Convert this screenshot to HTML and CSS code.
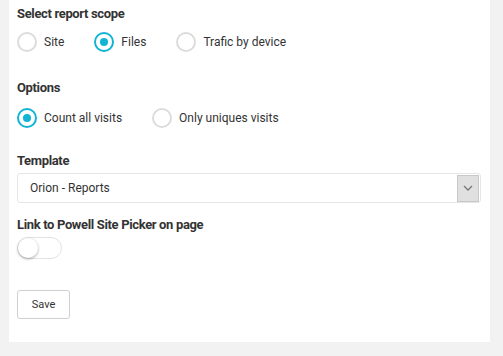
FILE: index.html
```html
<!DOCTYPE html>
<html>
<head>
<meta charset="utf-8">
<link rel="stylesheet" href="styles.css">
</head>
<body>
<div class="panel">
  <div class="section s1">
    <div class="heading">Select report scope</div>
    <div class="radios">
      <label class="radio"><span class="dot"></span><span class="lbl">Site</span></label>
      <label class="radio on"><span class="dot"></span><span class="lbl">Files</span></label>
      <label class="radio"><span class="dot"></span><span class="lbl">Trafic by device</span></label>
    </div>
  </div>
  <div class="section s2">
    <div class="heading">Options</div>
    <div class="radios">
      <label class="radio on"><span class="dot"></span><span class="lbl">Count all visits</span></label>
      <label class="radio"><span class="dot"></span><span class="lbl">Only uniques visits</span></label>
    </div>
  </div>
  <div class="section s3">
    <div class="heading">Template</div>
    <div class="select">
      <span class="value">Orion - Reports</span>
      <span class="arrow"><svg width="10" height="6" viewBox="0 0 10 6"><path d="M1 1 L5 5 L9 1" fill="none" stroke="#777" stroke-width="1.3"/></svg></span>
    </div>
  </div>
  <div class="section s4">
    <div class="heading">Link to Powell Site Picker on page</div>
    <div class="toggle"><span class="knob"></span></div>
  </div>
  <button class="save">Save</button>
</div>
</body>
</html>
```
FILE: styles.css
```css
html, body { margin: 0; padding: 0; }
body {
  background: #f2f2f2;
  width: 503px;
  height: 356px;
  font-family: Roboto, "Noto Sans", sans-serif;
  color: #333;
}
.panel {
  margin-left: 9px;
  width: 481px;
  height: 342px;
  background: #fff;
  box-sizing: border-box;
  padding: 6px 9px 0 8px;
}
.heading {
  font-size: 13px;
  font-weight: 700;
  line-height: 16px;
  letter-spacing: -0.35px;
  color: #333;
}
.radios {
  display: flex;
  margin-top: 10px;
}
.s2 .radios { margin-top: 12px; }
.radio {
  display: flex;
  align-items: center;
  margin-right: 30px;
  font-size: 12px;
}
.dot {
  width: 16px;
  height: 16px;
  border: 2px solid #dcdcdc;
  border-radius: 50%;
  box-sizing: content-box;
  position: relative;
  margin-right: 7px;
}
.radio.on .dot { border-color: #11b4d4; }
.radio.on .dot::after {
  content: "";
  position: absolute;
  left: 4px; top: 4px;
  width: 8px; height: 8px;
  border-radius: 50%;
  background: #11b4d4;
}
.s1 { margin-bottom: 28px; }
.s2 { margin-bottom: 25px; }
.s3 { margin-bottom: 14px; }
.s4 { margin-bottom: 31px; }
.select {
  margin-top: 4px;
  height: 30px;
  box-sizing: border-box;
  border: 1px solid #e6e6e6;
  border-radius: 3px;
  display: flex;
  align-items: center;
  justify-content: space-between;
  font-size: 12px;
}
.value { padding-left: 12px; }
.arrow {
  width: 20px;
  height: 25px;
  background: #e0e0e0;
  border: 1px solid #c8c8c8;
  display: flex;
  align-items: center;
  justify-content: center;
  margin-right: 1px;
}
.toggle {
  margin-top: 4px;
  width: 45px;
  height: 22px;
  box-sizing: border-box;
  border: 1px solid #e3e3e3;
  border-radius: 11px;
  position: relative;
}
.knob {
  position: absolute;
  left: 0; top: 0;
  width: 20px; height: 20px;
  border-radius: 50%;
  background: #fff;
  box-shadow: 0 1px 3px rgba(0,0,0,0.35);
}
.save {
  display: block;
  width: 53px;
  height: 29px;
  background: #fff;
  border: 1px solid #cfcfcf;
  border-radius: 3px;
  font-family: inherit;
  font-size: 11px;
  color: #333;
  padding: 0;
}
```
